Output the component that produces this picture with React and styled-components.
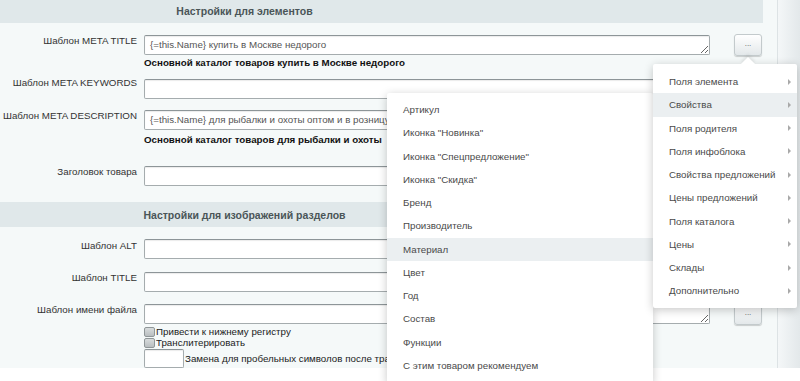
import React from 'react';
import styled, { createGlobalStyle } from 'styled-components';

const Global = createGlobalStyle`
  html, body { margin: 0; padding: 0; }
  body {
    width: 800px; height: 381px; overflow: hidden; background: #fff;
    font-family: "Liberation Sans", Arial, sans-serif;
  }
`;

const Page = styled.div`
  position: relative;
  width: 800px;
  height: 381px;
  overflow: hidden;
  display: grid;
  grid-template-columns: 777px 1fr;
  grid-template-rows: 368px 1fr;
  background: #fff;
`;

const Panel = styled.div`
  background: #f5f9f9;
  padding-right: 14px;
  overflow: hidden;
  box-shadow: 0 1px 2px rgba(0, 0, 0, 0.12);
  display: flex;
  flex-direction: column;
`;

const Side = styled.div`
  border-left: 1px solid #dde3e5;
  background: linear-gradient(to right, #f4f7f8, #e3e8ea);
`;

const Bottom = styled.div`
  grid-column: 1 / 3;
  background: #fff;
`;

const Heading = styled.div`
  flex: none;
  height: 25px;
  margin-top: ${p => p.$mt || 0}px;
  background: #e0e8ea;
  display: grid;
  grid-template-columns: 489px;
  align-items: center;
  text-align: center;
  font-size: 10.5px;
  font-weight: bold;
  color: #4a5558;
`;

const Row = styled.div`
  flex: none;
  display: flex;
  align-items: flex-start;
  margin-top: ${p => p.$mt || 0}px;
`;

const Label = styled.div`
  width: 137px;
  flex: none;
  text-align: right;
  font-size: 9.75px;
  line-height: 12px;
  color: #333;
  margin-top: ${p => p.$off || 0}px;
  white-space: nowrap;
`;

const Field = styled.div`
  margin-left: 7px;
  width: 566px;
  flex: none;
`;

const Area = styled.textarea`
  display: block;
  box-sizing: border-box;
  width: 100%;
  height: ${p => p.$h || 20}px;
  margin: 0;
  padding: 3px 5px;
  border: 1px solid #a5acae;
  border-top-color: #8d9598;
  border-radius: 2px;
  background: #fff;
  box-shadow: inset 0 1px 1px rgba(0, 0, 0, 0.08);
  font-family: inherit;
  font-size: 9.75px;
  line-height: 12px;
  color: #555;
  overflow: hidden;
  white-space: nowrap;
  resize: both;
  outline: none;
`;

const TextInput = styled.input`
  display: block;
  box-sizing: border-box;
  width: ${p => p.$w || '100%'};
  height: ${p => p.$h || 20}px;
  margin: 0;
  padding: 0 5px;
  border: 1px solid #a5acae;
  border-top-color: #8d9598;
  border-radius: 2px;
  background: #fff;
  box-shadow: inset 0 1px 1px rgba(0, 0, 0, 0.08);
  font-family: inherit;
  font-size: 9.75px;
  color: #555;
  outline: none;
`;

const Note = styled.div`
  margin-top: ${p => p.$mt || 0}px;
  font-size: 9.75px;
  line-height: 12px;
  font-weight: bold;
  color: #111;
  white-space: nowrap;
`;

const DotsButton = styled.button`
  flex: none;
  margin: ${p => p.$mt || -1}px 0 0 24px;
  width: 28px;
  height: 22px;
  padding: 0 0 3px;
  border: 1px solid #c3cacc;
  border-radius: 3px;
  background: linear-gradient(#ffffff, #e3e8ea);
  box-shadow: 0 1px 1px rgba(0, 0, 0, 0.18);
  font-family: inherit;
  font-size: 8px;
  color: #555;
  line-height: 1;
`;

const CheckLine = styled.label`
  display: flex;
  align-items: center;
  height: 11px;
  margin-top: ${p => p.$mt || 0}px;
  font-size: 9.75px;
  color: #222;
  white-space: nowrap;
`;

const Box = styled.span`
  box-sizing: border-box;
  width: 11px;
  height: 10px;
  margin-right: 1px;
  border: 1px solid #8f9698;
  border-radius: 2px;
  background: linear-gradient(#d8dcdd, #b9bec0);
`;

const InlineRow = styled.div`
  display: flex;
  align-items: flex-end;
  margin-top: 1px;
`;

const InlineText = styled.span`
  font-size: 9.75px;
  line-height: 12px;
  color: #222;
  padding-bottom: 3px;
  padding-left: 1px;
  white-space: nowrap;
`;

const Menu = styled.div`
  position: absolute;
  left: ${p => p.$x}px;
  top: ${p => p.$y}px;
  width: ${p => p.$w}px;
  box-sizing: border-box;
  padding: ${p => p.$pad};
  background: #fff;
  border-radius: 2px;
  box-shadow: 0 2px 10px rgba(0, 0, 0, 0.22);
  z-index: ${p => p.$z || 1};
`;

const Pointer = styled.span`
  position: absolute;
  top: -5px;
  left: 90px;
  width: 10px;
  height: 10px;
  background: #fff;
  transform: rotate(45deg);
  box-shadow: -2px -2px 3px rgba(0, 0, 0, 0.08);
`;

const Item = styled.div`
  position: relative;
  height: 23.25px;
  display: flex;
  align-items: center;
  padding-left: 16px;
  font-size: 9.75px;
  color: #4a4a4a;
  white-space: nowrap;
  background: ${p => (p.$active ? '#ebeff1' : 'transparent')};
`;

const Arrow = styled.span`
  position: absolute;
  right: 6px;
  top: 50%;
  margin-top: -3px;
  width: 0;
  height: 0;
  border-left: 3px solid #a9a9a9;
  border-top: 3px solid transparent;
  border-bottom: 3px solid transparent;
`;

const mainItems = [
  'Поля элемента',
  'Свойства',
  'Поля родителя',
  'Поля инфоблока',
  'Свойства предложений',
  'Цены предложений',
  'Поля каталога',
  'Цены',
  'Склады',
  'Дополнительно',
];

const subItems = [
  'Артикул',
  'Иконка "Новинка"',
  'Иконка "Спецпредложение"',
  'Иконка "Скидка"',
  'Бренд',
  'Производитель',
  'Материал',
  'Цвет',
  'Год',
  'Состав',
  'Функции',
  'С этим товаром рекомендуем',
];

export default function App() {
  return (
    <>
      <Global />
      <Page>
        <Panel>
          <Heading $mt={-2}>Настройки для элементов</Heading>

          <Row $mt={12}>
            <Label>Шаблон META TITLE</Label>
            <Field>
              <Area defaultValue="{=this.Name} купить в Москве недорого" />
              <Note $mt={2}>Основной каталог товаров купить в Москве недорого</Note>
            </Field>
            <DotsButton>...</DotsButton>
          </Row>

          <Row $mt={10}>
            <Label $off={-2}>Шаблон META KEYWORDS</Label>
            <Field>
              <Area defaultValue="" />
            </Field>
            <DotsButton>...</DotsButton>
          </Row>

          <Row $mt={10}>
            <Label>Шаблон META DESCRIPTION</Label>
            <Field>
              <Area defaultValue="{=this.Name} для рыбалки и охоты оптом и в розницу" />
              <Note $mt={4}>Основной каталог товаров для рыбалки и охоты</Note>
            </Field>
            <DotsButton>...</DotsButton>
          </Row>

          <Row $mt={20}>
            <Label>Заголовок товара</Label>
            <Field>
              <TextInput defaultValue="" />
            </Field>
          </Row>

          <Heading $mt={16}>Настройки для изображений разделов</Heading>

          <Row $mt={12}>
            <Label $off={1}>Шаблон ALT</Label>
            <Field>
              <Area defaultValue="" />
            </Field>
            <DotsButton>...</DotsButton>
          </Row>

          <Row $mt={12}>
            <Label>Шаблон TITLE</Label>
            <Field>
              <Area defaultValue="" />
            </Field>
            <DotsButton>...</DotsButton>
          </Row>

          <Row $mt={11}>
            <Label>Шаблон имени файла</Label>
            <Field>
              <Area defaultValue="" />
              <CheckLine $mt={2}>
                <Box />
                Привести к нижнему регистру
              </CheckLine>
              <CheckLine>
                <Box />
                Транслитерировать
              </CheckLine>
              <InlineRow>
                <TextInput $w="40px" $h={19} defaultValue="" />
                <InlineText>Замена для пробельных символов после транслитерации</InlineText>
              </InlineRow>
            </Field>
            <DotsButton $mt={0}>...</DotsButton>
          </Row>
        </Panel>
        <Side />
        <Bottom />

        <Menu $x={387} $y={93} $w={266} $pad="5px 0 6px" $z={1}>
          {subItems.map(t => (
            <Item key={t} $active={t === 'Материал'}>
              {t}
            </Item>
          ))}
        </Menu>

        <Menu $x={653} $y={64} $w={144} $pad="6px 0 5px" $z={2}>
          <Pointer />
          {mainItems.map(t => (
            <Item key={t} $active={t === 'Свойства'}>
              {t}
              <Arrow />
            </Item>
          ))}
        </Menu>
      </Page>
    </>
  );
}
